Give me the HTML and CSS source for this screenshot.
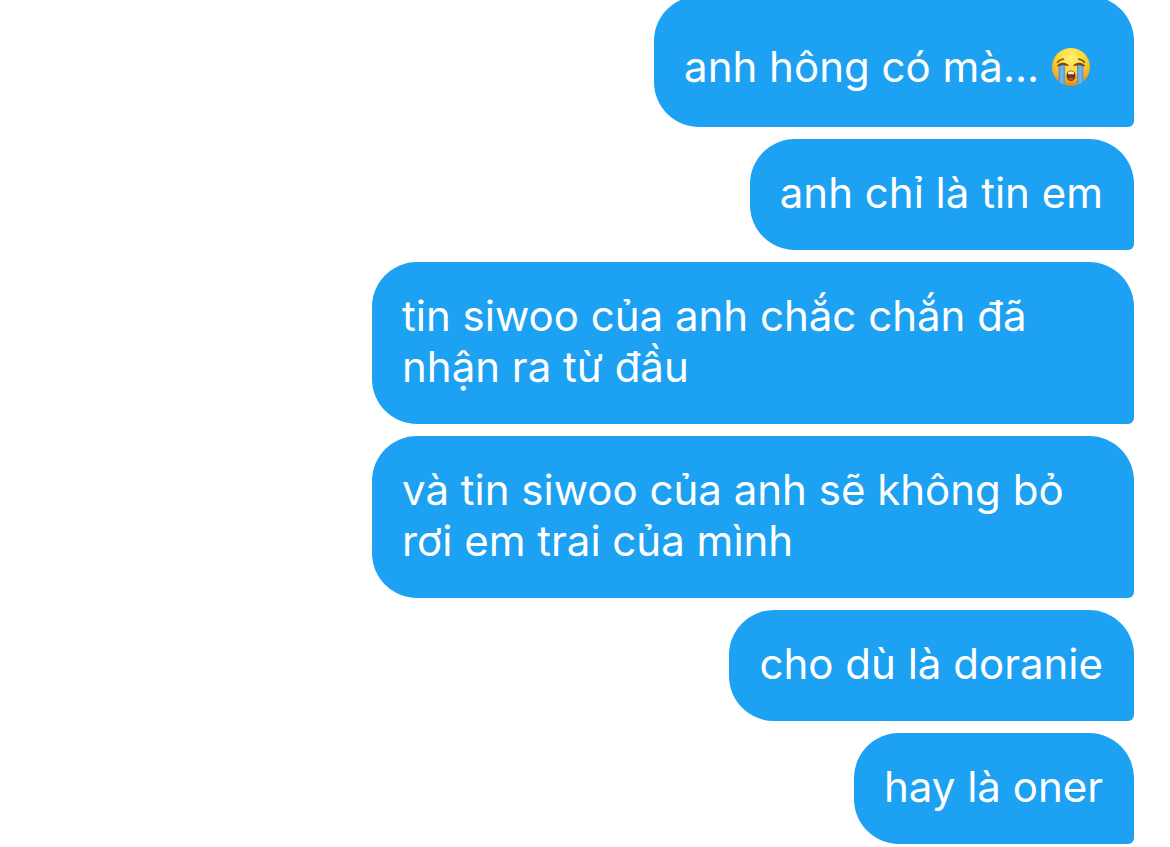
FILE: index.html
```html
<!DOCTYPE html>
<html lang="vi">
<head>
<meta charset="utf-8">
<meta name="viewport" content="width=device-width, initial-scale=1">
<title>Tin nhắn</title>
<link rel="stylesheet" href="styles.css">
</head>
<body>
<main class="chat">
  <p class="bubble bubble-first">anh hông có mà... <svg class="emoji" viewBox="0 0 40 40" role="img" aria-label="Mặt khóc to">
    <defs>
      <radialGradient id="face" cx="0.5" cy="0.25" r="0.75"><stop offset="0" stop-color="#fff176"/><stop offset="0.45" stop-color="#fed83a"/><stop offset="0.8" stop-color="#f8ad20"/><stop offset="1" stop-color="#e58512"/></radialGradient>
      <linearGradient id="tears" x1="0" y1="0" x2="1" y2="0"><stop offset="0" stop-color="#4294dc"/><stop offset="0.5" stop-color="#79bbec"/><stop offset="1" stop-color="#4b9ade"/></linearGradient>
      <clipPath id="head"><circle cx="20" cy="20" r="19"/></clipPath>
    </defs>
    <circle cx="20" cy="20" r="19" fill="url(#face)"/>
    <g clip-path="url(#head)" fill="url(#tears)">
      <path d="M7.5 18.5q3.500-1 6.500 0v20h-6.500z"/>
      <path d="M26 18.500q3.500-1 6.500 0v20h-6.500z"/>
    </g>
    <path d="M6 19Q11.500 13.500 17.500 18.500Q11.500 17 6 19ZM22.500 18.500Q28.500 13.500 34 19Q28.500 17 22.500 18.500Z" fill="#6b3d10" stroke="#6b3d10" stroke-width="0.800" stroke-linejoin="round"/>
    <path d="M6.500 15.500Q8.500 12.500 12.500 12M33.500 15.500Q31.500 12.500 27.500 12" fill="none" stroke="#895111" stroke-width="1.400" stroke-linecap="round"/>
    <ellipse cx="20" cy="28.800" rx="4.500" ry="5.300" fill="#713312"/>
    <path d="M17 26.500q0-2.200 3-2.200t3 2.200v0.800h-6z" fill="#fff4dc"/>
    <path d="M17 31.500q3-2 6 0-3 3.500-6 0" fill="#bb512d"/>
  </svg></p>
  <p class="bubble">anh chỉ là tin em</p>
  <p class="bubble">tin siwoo của anh chắc chắn đã nhận ra từ đầu</p>
  <p class="bubble">và tin siwoo của anh sẽ không bỏ rơi em trai của mình</p>
  <p class="bubble">cho dù là doranie</p>
  <p class="bubble">hay là oner</p>
</main>
</body>
</html>
```
FILE: styles.css
```css
body {
  margin: 0;
  background: #fff;
  font-family: Inter, "Noto Sans", sans-serif;
}

.chat {
  display: flex;
  flex-direction: column;
  align-items: flex-end;
  gap: 12px;
  padding: 0 36px 3px;
}

.bubble {
  box-sizing: border-box;
  max-width: 762px;
  margin: 0;
  padding: 28px 31px 32px 30px;
  border-radius: 45px 45px 6px 45px;
  background: #1da1f2;
  color: #fff;
  font-size: 42px;
  line-height: 51px;
}

.bubble-first {
  margin-top: -4px;
  padding: 45px 43px 35px 30px;
}

.emoji {
  width: 40px;
  height: 40px;
  vertical-align: -5px;
}
```
